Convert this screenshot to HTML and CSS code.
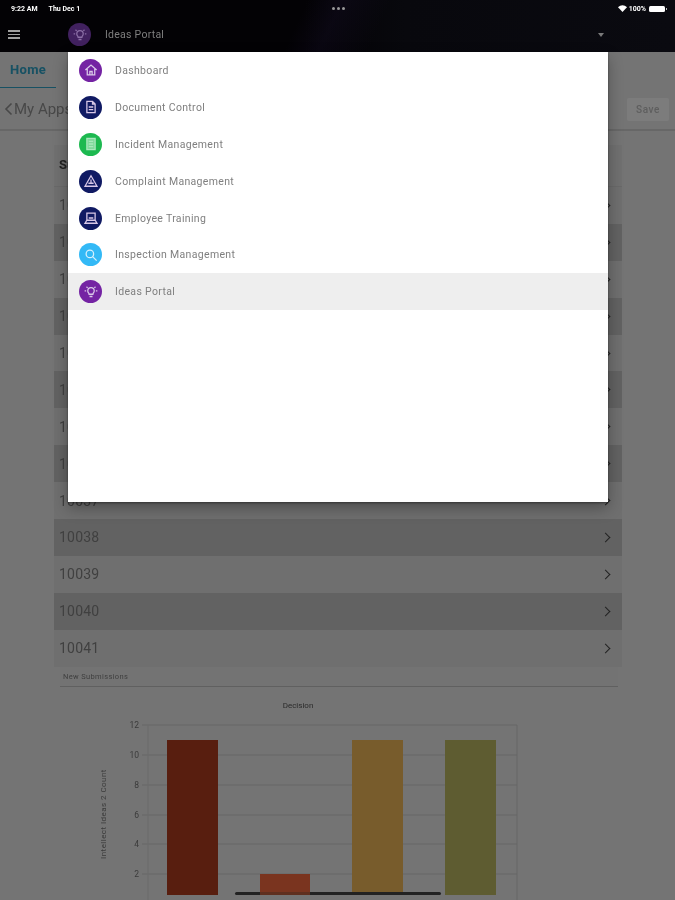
FILE: index.html
```html
<!DOCTYPE html>
<html lang="en">
<head>
<meta charset="utf-8">
<title>Ideas Portal</title>
<link rel="stylesheet" href="styles.css">
</head>
<body>
<div class="app">
  <header class="header">
    <div class="status">
      <div class="status-left"><span>9:22 AM</span><span>Thu Dec 1</span></div>
      <div class="status-dots"><i></i><i></i><i></i></div>
      <div class="status-right">
        <svg class="wifi" viewBox="0 0 12 9"><path d="M6 9 0 2.800C3.400-.9 8.600-.9 12 2.800Z" fill="#fff"/></svg>
        <span>100%</span>
        <span class="battery"><b></b></span>
      </div>
    </div>
    <div class="toolbar">
      <div class="burger"><i></i><i></i><i></i></div>
      <div class="current">
        <span class="circle circle-dim">
          <svg viewBox="0 0 24 24" class="glyph"><use href="#bulb"/></svg>
        </span>
        <span class="current-label">Ideas Portal</span>
      </div>
      <span class="caret"></span>
    </div>
  </header>

  <main class="main">
    <nav class="tabs"><a class="tab">Home</a></nav>
    <div class="subbar">
      <div class="back"><svg viewBox="0 0 9 14" class="back-icon"><path d="M7.500 1.500 2 7l5.500 5.500" fill="none" stroke="currentColor" stroke-width="1.600"/></svg><span>My Apps</span></div>
      <button class="save">Save</button>
    </div>
    <section class="content">
      <div class="table">
        <div class="table-head">Submission ID</div>
        <div class="row">10029<span class="chev"></span></div>
        <div class="row">10030<span class="chev"></span></div>
        <div class="row">10031<span class="chev"></span></div>
        <div class="row">10032<span class="chev"></span></div>
        <div class="row">10033<span class="chev"></span></div>
        <div class="row">10034<span class="chev"></span></div>
        <div class="row">10035<span class="chev"></span></div>
        <div class="row">10036<span class="chev"></span></div>
        <div class="row">10037<span class="chev"></span></div>
        <div class="row">10038<span class="chev"></span></div>
        <div class="row">10039<span class="chev"></span></div>
        <div class="row">10040<span class="chev"></span></div>
        <div class="row">10041<span class="chev"></span></div>
      </div>
      <div class="panel">
        <div class="panel-title">New Submissions</div>
        <svg class="chart" viewBox="0 0 560 230" width="560" height="230">
          <text x="240" y="24" class="chart-title" text-anchor="middle">Decision</text>
          <g class="grid">
            <path d="M84 41H459V240M84 71H459M84 101H459M84 131H459M84 160H459M84 190H459"/>
            <path d="M90 41V240" class="axis"/>
          </g>
          <g class="ticks" text-anchor="end">
            <text x="81" y="44">12</text>
            <text x="81" y="74">10</text>
            <text x="81" y="104">8</text>
            <text x="81" y="134">6</text>
            <text x="81" y="163">4</text>
            <text x="81" y="193">2</text>
          </g>
          <text class="ytitle" transform="translate(48 130) rotate(-90)" text-anchor="middle">Intellect Ideas 2 Count</text>
          <rect x="109" y="56" width="51" height="155" fill="#b03c1e"/>
          <rect x="202" y="190" width="50" height="21" fill="#f4683f"/>
          <rect x="294" y="56" width="51" height="155" fill="#f0b858"/>
          <rect x="387" y="56" width="51" height="155" fill="#bcb862"/>
        </svg>
      </div>
    </section>

    <div class="scrim"></div>

    <ul class="menu">
      <li class="item"><span class="circle c-purple"><svg viewBox="0 0 24 24" class="glyph"><path d="M4.500 12 12 5.500l7.500 6.500M7 10.500V18.500h10v-8M10.500 18.500v-4.500h3v4.500"/></svg></span>Dashboard</li>
      <li class="item"><span class="circle c-navy"><svg viewBox="0 0 24 24" class="glyph"><path d="M6.500 4.500h7.500l3.500 3.500v11.500H6.500ZM14 4.500V8h3.500M9 12h6M9 15.500h6"/></svg></span>Document Control</li>
      <li class="item"><span class="circle c-green"><svg viewBox="0 0 24 24" class="glyph glyph-green"><path d="M6.500 4.500h11v15h-11ZM9 8.500h6M9 12h6M9 15.500h6"/></svg></span>Incident Management</li>
      <li class="item"><span class="circle c-navy"><svg viewBox="0 0 24 24" class="glyph"><path d="M12 5 20 19H4ZM8.500 15h7M12 10v5"/></svg></span>Complaint Management</li>
      <li class="item"><span class="circle c-navy"><svg viewBox="0 0 24 24" class="glyph"><path d="M6.500 5.500h11v9.500h-11ZM4 19h16l-2.500-4h-11ZM9 12h6"/></svg></span>Employee Training</li>
      <li class="item"><span class="circle c-sky"><svg viewBox="0 0 24 24" class="glyph glyph-sky"><circle cx="10.500" cy="10.500" r="5"/><path d="m14.200 14.200 5.300 5.300"/></svg></span>Inspection Management</li>
      <li class="item item-active"><span class="circle c-purple"><svg viewBox="0 0 24 24" class="glyph"><g id="bulb"><path d="M9.500 15c0-1.800-1.800-2-1.800-4.500a4.300 4.300 0 0 1 8.600 0c0 2.500-1.800 2.700-1.800 4.500ZM10 18h4M3.500 10.500h2M18.500 10.500h2M6 5l1.500 1.500M18 5l-1.500 1.500"/></g></svg></span>Ideas Portal</li>
    </ul>
  </main>

  <div class="home-bar"></div>
</div>
</body>
</html>
```
FILE: styles.css
```css
* { box-sizing: border-box; }
html, body { margin: 0; padding: 0; }
body { background: #747474; font-family: "Roboto", "Liberation Sans", sans-serif; }

.app {
  position: relative;
  width: 675px;
  height: 900px;
  overflow: hidden;
  display: flex;
  flex-direction: column;
  filter: blur(0.6px);
}

/* header */
.header {
  height: 52px;
  flex: none;
  color: #fff;
  background:
    linear-gradient(115deg, rgba(24,16,44,0) 44%, rgba(24,16,44,.3) 49%, rgba(24,16,44,0) 56%),
    linear-gradient(90deg, #030205 0%, #030205 45%, #08080d 60%, #0a0a10 100%);
}
.status {
  height: 17px;
  display: flex;
  align-items: center;
  justify-content: space-between;
  padding: 0 10px 0 11px;
  font-size: 7px;
  font-weight: 700;
  position: relative;
}
.status-left { display: flex; gap: 11px; }
.status-dots { display: flex; gap: 2px; position: absolute; left: 332px; top: 7px; }
.status-dots i { width: 3px; height: 3px; border-radius: 50%; background: #999; }
.status-right { display: flex; align-items: center; gap: 2px; }
.wifi { width: 9px; height: 7px; }
.battery { width: 16px; height: 6px; border-radius: 1.500px; background: #fff; margin-left: 1px; position: relative; }
.battery b { position: absolute; right: -2px; top: 2px; width: 1px; height: 2px; background: #bbb; }

.toolbar {
  height: 35px;
  display: flex;
  align-items: center;
  padding: 0 0 0 8px;
}
.burger { width: 12px; display: flex; flex-direction: column; gap: 2px; margin-right: 48px; }
.burger i { height: 1.500px; background: #a0a0a0; }
.current { display: flex; align-items: center; gap: 14px; flex: 1; }
.current-label { font-size: 10.500px; color: #7f7f7f; letter-spacing: .25px; }
.caret {
  width: 0; height: 0;
  margin-right: 71px;
  border-left: 3px solid transparent;
  border-right: 3px solid transparent;
  border-top: 4px solid #7a7a7a;
}

/* round icons */
.circle {
  width: 23px;
  height: 23px;
  border-radius: 50%;
  flex: none;
  display: flex;
  align-items: center;
  justify-content: center;
}
.circle-dim { background: #41215f; }
.c-purple { background: #7423a3; }
.c-navy { background: #101a63; }
.c-green { background: #1db950; }
.c-sky { background: #33b9f6; }
.glyph {
  width: 18px;
  height: 18px;
  fill: none;
  stroke: #d9c8e8;
  stroke-width: 1.700;
}
.glyph-green { stroke: #a9e8bd; fill: #7fd99b; }
.glyph-sky { stroke: #d5f0fd; }
.circle-dim .glyph { stroke: #8b6ea5; }

/* main */
.main {
  position: relative;
  flex: 1;
  min-height: 0;
  background: #e8e8e8;
  display: flex;
  flex-direction: column;
}
.tabs { height: 38px; flex: none; padding-top: 9px; }
.tab {
  display: block;
  width: 56px;
  height: 27px;
  padding-left: 10px;
  font-size: 13px;
  font-weight: 700;
  letter-spacing: .35px;
  line-height: 18px;
  color: #2ea2c6;
  border-bottom: 1.500px solid #2ea2c6;
}
.subbar {
  height: 41px;
  flex: none;
  display: flex;
  align-items: center;
  justify-content: space-between;
  padding: 0 6px 1px 4px;
  border-bottom: 2px solid #cfcfcf;
}
.back { display: flex; align-items: center; gap: 1px; font-size: 15px; color: #909090; }
.back-icon { width: 9px; height: 14px; }
.save {
  width: 42px;
  height: 23px;
  border: 0;
  border-radius: 2px;
  padding: 0;
  background: #f8f8f8;
  color: #bcbcbc;
  font: 500 10px "Roboto", sans-serif;
  letter-spacing: .6px;
}
.content { padding: 14px 0 0 54px; flex: 1; min-height: 0; }
.table { width: 568px; }
.table-head {
  height: 42px;
  padding-left: 5px;
  font-size: 13px;
  font-weight: 700;
  line-height: 40px;
  color: #444;
  background: #e0e0e0;
  border-bottom: 1px solid #d2d2d2;
}
.row {
  height: 36.900px;
  padding: 0 11px 0 5px;
  display: flex;
  align-items: center;
  justify-content: space-between;
  font-size: 14px;
  letter-spacing: .2px;
  color: #808080;
  background: #dedede;
}
.row:nth-child(odd) { background: #c4c4c4; }
.chev {
  width: 7px;
  height: 7px;
  margin-right: 2px;
  border-top: 1.500px solid #444;
  border-right: 1.500px solid #444;
  transform: rotate(45deg);
}
.panel { width: 558px; margin-left: 6px; }
.panel-title {
  height: 20px;
  padding-left: 3px;
  font-size: 7.500px;
  line-height: 20px;
  color: #808080;
  letter-spacing: .35px;
  border-bottom: 1.500px solid #c0c0c0;
  background: #e6e6e6;
}
.chart { display: block; margin: -3px 0 0 -2px; overflow: visible; }
.chart-title { font: 8px "Roboto", sans-serif; fill: #555; }
.grid path { fill: none; stroke: #cccccc; stroke-width: 1; }
.grid .axis { stroke: #d6d6d6; }
.ticks text { font: 8.500px "Roboto", sans-serif; fill: #777; }
.ytitle { font: 8px "Roboto", sans-serif; fill: #777; letter-spacing: .45px; }

/* overlay */
.scrim { position: absolute; inset: 0; background: rgba(0, 0, 0, .5); }
.menu {
  position: absolute;
  left: 68px;
  top: 0;
  width: 540px;
  height: 450px;
  margin: 0;
  padding: 0;
  list-style: none;
  background: #fff;
  box-shadow: 0 1px 2px rgba(0,0,0,.4), 0 6px 14px rgba(0,0,0,.3);
}
.item {
  height: 36.900px;
  padding-left: 11px;
  display: flex;
  align-items: center;
  gap: 13px;
  font-size: 10.500px;
  letter-spacing: .33px;
  color: #7f7f7f;
}
.item-active { background: #eeeeee; }
.home-bar {
  position: absolute;
  left: 235px;
  bottom: 5px;
  width: 206px;
  height: 3px;
  border-radius: 2px;
  background: linear-gradient(90deg, #222 25px, #5f2f1f 25px, #5f2f1f 75px, #222 75px);
}
```
